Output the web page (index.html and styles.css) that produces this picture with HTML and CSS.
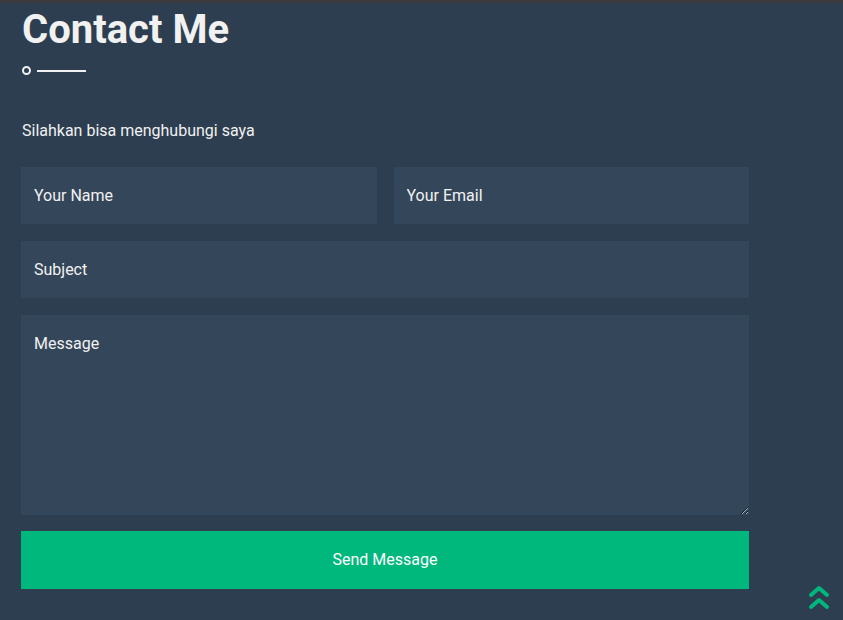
FILE: index.html
```html
<!DOCTYPE html>
<html>
<head>
<meta charset="utf-8">
<link rel="stylesheet" href="styles.css">
</head>
<body>
<div class="topbar"></div>
<section class="contact">
  <h2 class="title">Contact Me</h2>
  <div class="divider"><span class="dot"></span><span class="line"></span></div>
  <p class="intro">Silahkan bisa menghubungi saya</p>
  <form class="form">
    <div class="row">
      <input class="field" type="text" placeholder="Your Name">
      <input class="field" type="email" placeholder="Your Email">
    </div>
    <input class="field" type="text" placeholder="Subject">
    <textarea class="field message" placeholder="Message"></textarea>
    <button class="send" type="button">Send Message</button>
  </form>
</section>
<a class="totop" href="#">
  <svg width="22" height="26" viewBox="0 0 22 26" fill="none" stroke="#00b87c" stroke-width="4" stroke-linecap="round" stroke-linejoin="round">
    <polyline points="3,10 11,3 19,10"/>
    <polyline points="3,22 11,15 19,22"/>
  </svg>
</a>
</body>
</html>
```
FILE: styles.css
```css
html, body {
  margin: 0;
  padding: 0;
  background: #2c3e50;
  font-family: Roboto, "Liberation Sans", sans-serif;
  color: #f1f1f1;
  height: 620px;
  overflow: hidden;
}
.topbar {
  height: 3px;
  background: #3b3b3b;
}
.contact {
  width: 728px;
  padding-left: 21px;
}
.title {
  margin: 5px 0 0 1px;
  font-size: 40px;
  font-weight: 700;
  line-height: 44px;
  color: #f1f1f1;
}
.divider {
  display: flex;
  align-items: center;
  gap: 6px;
  margin-top: 14px;
  margin-left: 1px;
}
.dot {
  width: 5px;
  height: 5px;
  border: 2px solid #f1f1f1;
  border-radius: 50%;
}
.line {
  width: 49px;
  height: 2px;
  background: #f1f1f1;
}
.intro {
  margin: 46px 0 0 1px;
  font-size: 16px;
  line-height: 20px;
}
.form {
  display: flex;
  flex-direction: column;
  gap: 17px;
  margin-top: 26px;
}
.row {
  display: flex;
  gap: 17px;
}
.row .field {
  flex: 1;
  min-width: 0;
}
.field {
  box-sizing: border-box;
  height: 57px;
  border: none;
  outline: none;
  background: #34465a;
  padding: 0 13px;
  font-family: Roboto, "Liberation Sans", sans-serif;
  font-size: 16px;
  color: #f1f1f1;
  width: 100%;
}
.field::placeholder {
  color: #f1f1f1;
  opacity: 1;
}
.message {
  height: 200px;
  padding: 19px 13px 18px;
  resize: vertical;
  display: block;
}
.send {
  margin-top: -1px;
  height: 58px;
  border: none;
  background: #00b87c;
  color: #fff;
  font-family: Roboto, "Liberation Sans", sans-serif;
  font-size: 16px;
  padding: 0 0 2px;
  cursor: pointer;
}
.totop {
  position: absolute;
  right: 13px;
  bottom: 9px;
  display: block;
  line-height: 0;
}
```
